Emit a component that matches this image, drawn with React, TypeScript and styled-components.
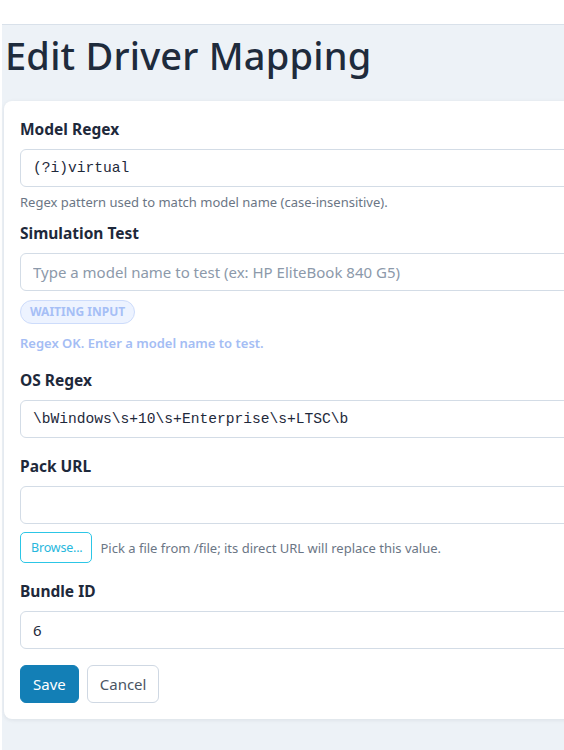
import React, { FC } from "react";
import styled, { createGlobalStyle } from "styled-components";

const GlobalStyle = createGlobalStyle`
  html, body {
    margin: 0;
    overflow: hidden;
    background: #ffffff;
  }

  body {
    font-family: "Noto Sans", "Open Sans", sans-serif;
    color: #1e293b;
  }
`;

const App: FC = () => {
  return (
    <>
      <GlobalStyle />
      <TopBar />
      <Main>
        <Title>Edit Driver Mapping</Title>

        <Card>
          <Field>
            <Label>Model Regex</Label>
            <Input mono defaultValue="(?i)virtual" />
            <Hint>Regex pattern used to match model name (case-insensitive).</Hint>
          </Field>

          <Field>
            <Label>Simulation Test</Label>
            <Input placeholder="Type a model name to test (ex: HP EliteBook 840 G5)" />
            <Badge>WAITING INPUT</Badge>
            <Status>Regex OK. Enter a model name to test.</Status>
          </Field>

          <Field>
            <Label>OS Regex</Label>
            <Input mono defaultValue="\bWindows\s+10\s+Enterprise\s+LTSC\b" />
          </Field>

          <Field>
            <Label>Pack URL</Label>
            <Input />
            <BrowseRow>
              <BrowseButton type="button">Browse...</BrowseButton>
              <InlineHint>Pick a file from /file; its direct URL will replace this value.</InlineHint>
            </BrowseRow>
          </Field>

          <Field>
            <Label>Bundle ID</Label>
            <Input defaultValue="6" />
          </Field>

          <Actions>
            <Button primary type="button">Save</Button>
            <Button type="button">Cancel</Button>
          </Actions>
        </Card>
      </Main>
    </>
  );
};

export default App;

const TopBar = styled.div`
  height: 24px;
  background: #ffffff;
`;

const Main = styled.main`
  margin-left: 2px;
  width: 640px;
  min-height: 760px;
  padding: 0 0 0 2px;
  background: #edf2f7;
  border-top: 1px solid #d9e1ea;
`;

const Title = styled.h1`
  margin: 0;
  padding: 6px 0 21px 1px;
  font-size: 38px;
  font-weight: 500;
  letter-spacing: 0.2px;
  line-height: 49px;
  color: #1e2b3c;
`;

const Card = styled.div`
  background: #ffffff;
  border-radius: 8px;
  padding: 16px;
  box-shadow: 0 1px 4px rgba(15, 23, 42, 0.08);
`;

const Field = styled.div`
  display: flex;
  flex-direction: column;
  align-items: flex-start;
  margin-bottom: 16px;
`;

const Label = styled.label`
  font-size: 15.5px;
  font-weight: 700;
  line-height: 24px;
  color: #1e293b;
  margin-bottom: 8px;
`;

const Input = styled.input<{ mono?: boolean }>`
  box-sizing: border-box;
  width: 100%;
  height: 38px;
  padding: 0 12px;
  border: 1px solid #d3dce6;
  border-radius: 6px;
  background: #ffffff;
  color: #1e293b;
  font-family: ${(p) =>
    p.mono ? '"Liberation Mono", "DejaVu Sans Mono", monospace' : '"Noto Sans", sans-serif'};
  font-size: ${(p) => (p.mono ? "14.6px" : "15px")};
  outline: none;

  &::placeholder {
    color: #8c99aa;
  }
`;

const Hint = styled.div`
  margin-top: 6px;
  margin-bottom: -6px;
  font-size: 13px;
  line-height: 18px;
  color: #6b7685;
`;

const Badge = styled.span`
  margin-top: 9px;
  padding: 0 9px;
  height: 22px;
  line-height: 22px;
  border: 1px solid #cddcfb;
  border-radius: 12px;
  background: #edf3ff;
  color: #a6bff6;
  font-size: 12px;
  font-weight: 700;
`;

const Status = styled.div`
  margin-top: 10px;
  font-size: 13px;
  font-weight: 600;
  line-height: 18px;
  color: #a4bdf4;
`;

const BrowseRow = styled.div`
  display: flex;
  align-items: center;
  gap: 8px;
  margin-top: 8px;
`;

const BrowseButton = styled.button`
  height: 31px;
  padding: 0 9px 0 10px;
  border: 1px solid #2cc6e6;
  border-radius: 5px;
  background: #ffffff;
  color: #27b7dd;
  font-family: "Noto Sans", sans-serif;
  font-size: 12.5px;
  letter-spacing: -0.2px;
`;

const InlineHint = styled.span`
  font-size: 13px;
  color: #6b7685;
`;

const Actions = styled.div`
  display: flex;
  gap: 8px;
`;

const Button = styled.button<{ primary?: boolean }>`
  height: 38px;
  padding: 0 12px;
  border-radius: 6px;
  border: 1px solid ${(p) => (p.primary ? "#137fb6" : "#cfd8e3")};
  background: ${(p) => (p.primary ? "#137fb6" : "#ffffff")};
  color: ${(p) => (p.primary ? "#ffffff" : "#4b5563")};
  font-family: "Noto Sans", sans-serif;
  font-size: 15px;
`;
